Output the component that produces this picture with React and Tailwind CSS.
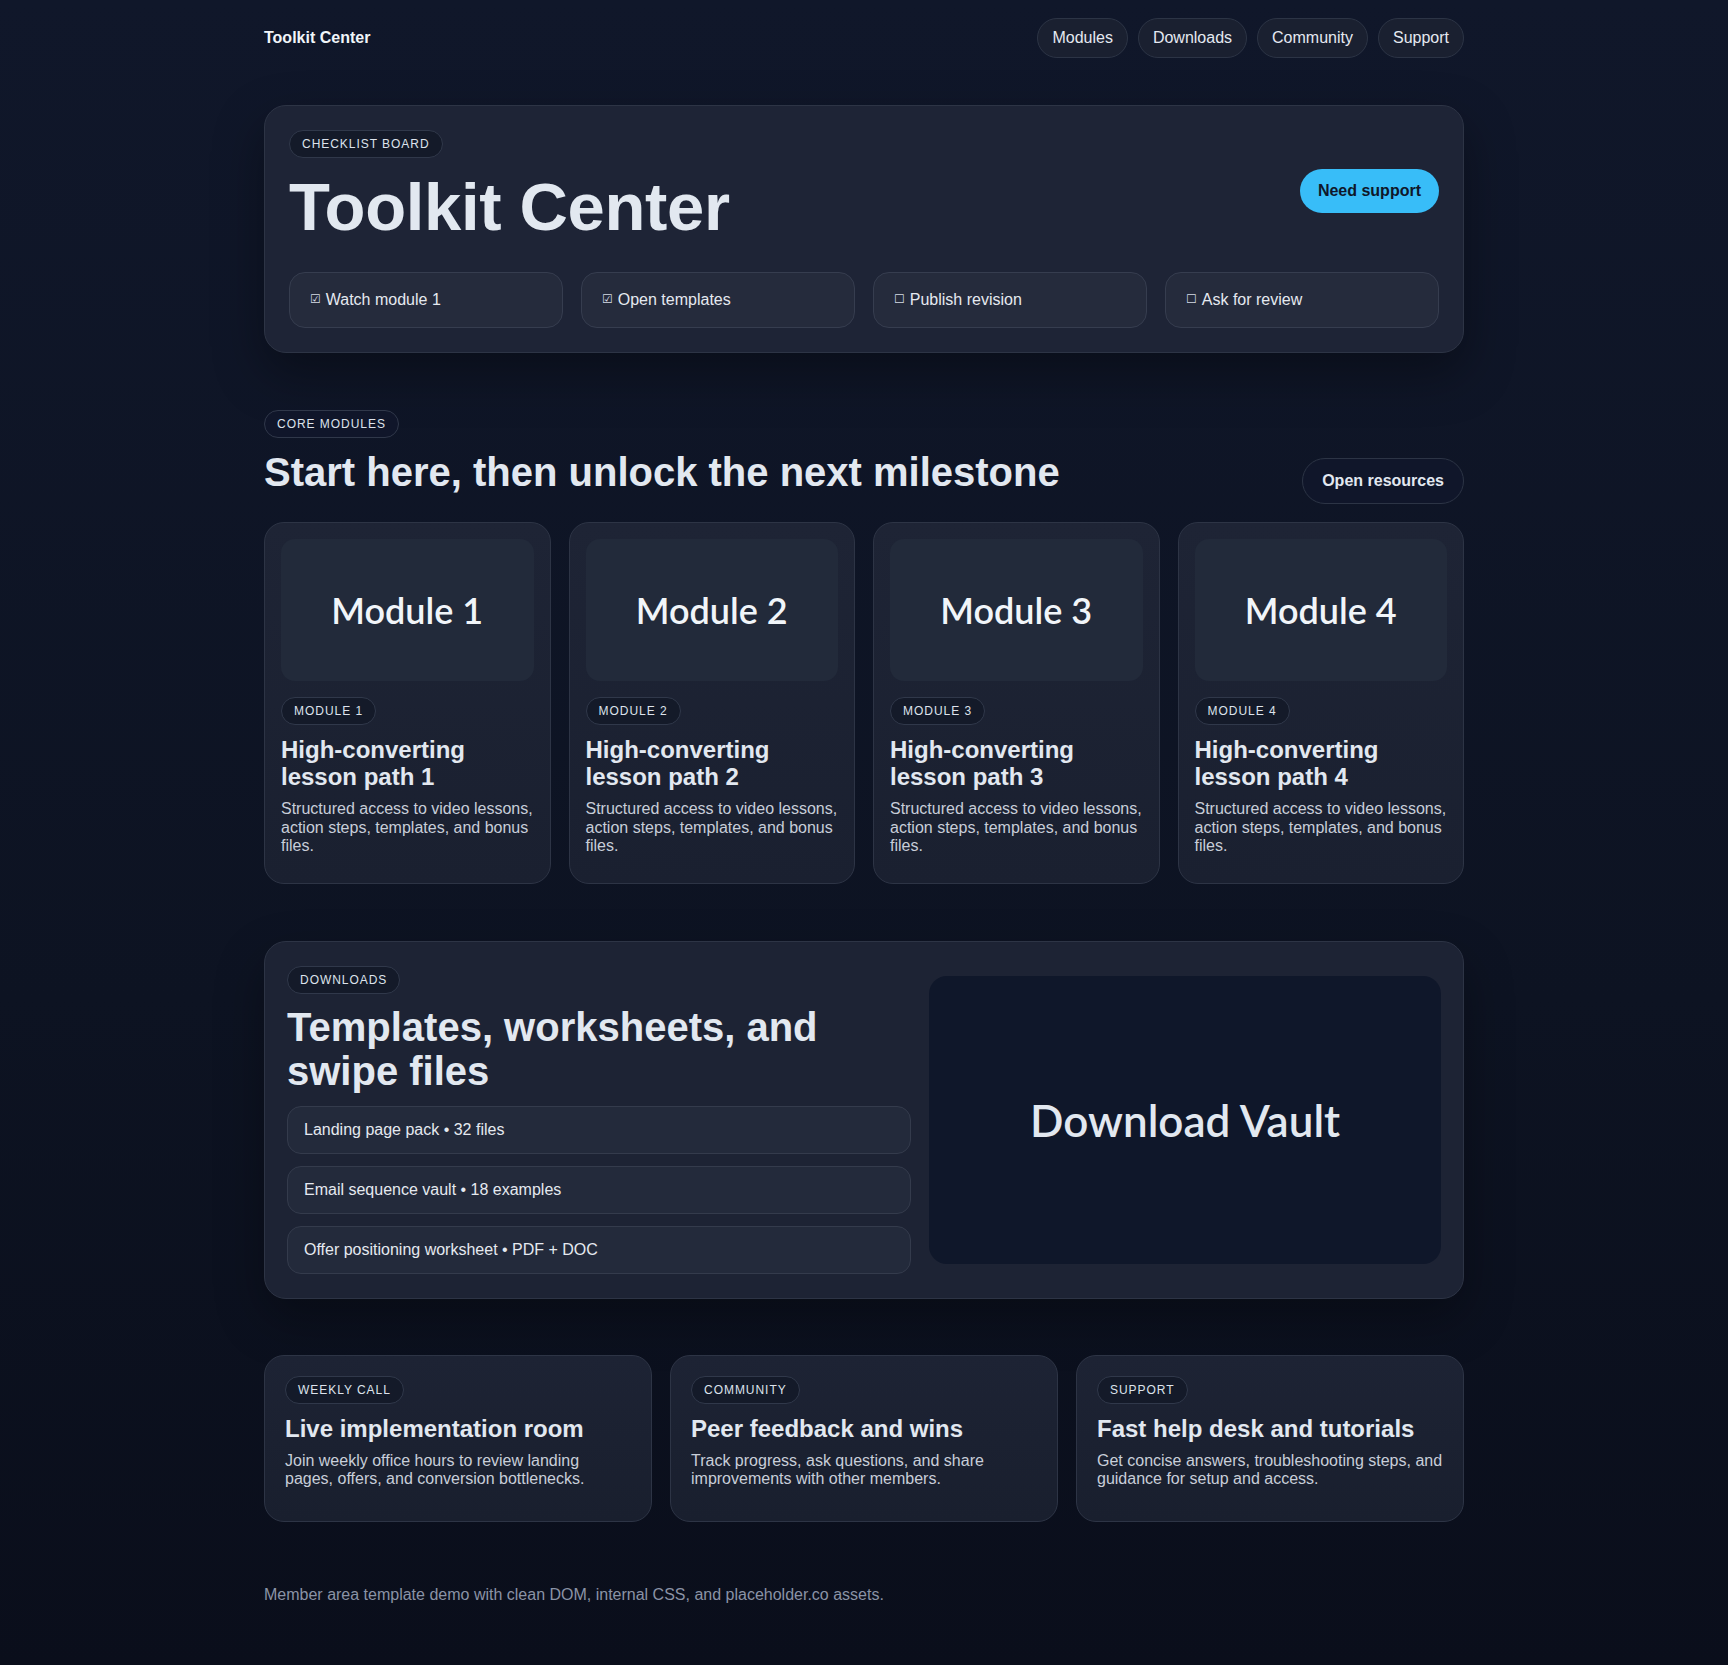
import React from "react";

const Badge = ({ children, className = "" }) => (
  <span
    className={`inline-flex items-center h-[28px] px-[12px] rounded-full border border-[#30384a] bg-[#141a29] text-[12px] tracking-[0.08em] uppercase text-[#dde3ec] leading-none ${className}`}
  >
    {children}
  </span>
);

const checklist = [
  { done: true, label: "Watch module 1" },
  { done: true, label: "Open templates" },
  { done: false, label: "Publish revision" },
  { done: false, label: "Ask for review" },
];

const modules = [1, 2, 3, 4];

const downloads = [
  "Landing page pack • 32 files",
  "Email sequence vault • 18 examples",
  "Offer positioning worksheet • PDF + DOC",
];

const bottomCards = [
  {
    tag: "Weekly call",
    title: "Live implementation room",
    desc: "Join weekly office hours to review landing pages, offers, and conversion bottlenecks.",
  },
  {
    tag: "Community",
    title: "Peer feedback and wins",
    desc: "Track progress, ask questions, and share improvements with other members.",
  },
  {
    tag: "Support",
    title: "Fast help desk and tutorials",
    desc: "Get concise answers, troubleshooting steps, and guidance for setup and access.",
  },
];

export default function App() {
  return (
    <div className="min-h-screen bg-[linear-gradient(180deg,#10172a_0%,#0d1322_60%,#0a0e1b_100%)] text-[#e2e8f0] font-['Liberation_Sans',Arial,sans-serif] leading-[1.15]">
      <div className="max-w-[1200px] mx-auto pt-[18px] pb-[61px]">
        {/* Header */}
        <header className="flex items-center justify-between h-[40px]">
          <div className="text-[16px] font-bold text-[#f1f5f9]">Toolkit Center</div>
          <nav className="flex items-center gap-[10px]">
            {["Modules", "Downloads", "Community", "Support"].map((n) => (
              <a
                key={n}
                className="h-[40px] px-[14px] flex items-center rounded-full border border-[#2c3445] bg-[#1a2030] text-[16px] text-[#e5e9f0]"
              >
                {n}
              </a>
            ))}
          </nav>
        </header>

        {/* Hero */}
        <section className="mt-[47px] rounded-[22px] border border-[#2d3445] bg-[#1e2436] p-6 shadow-[0_20px_50px_rgba(0,0,0,0.35)]">
          <div className="flex items-center justify-between">
            <div>
              <Badge>Checklist board</Badge>
              <h1 className="mt-[14px] text-[67px] font-bold leading-[1.05] tracking-[-0.005em] text-[#e2e8f0]">
                Toolkit Center
              </h1>
            </div>
            <button className="mt-[10px] h-[44px] px-[18px] rounded-full bg-[#38bdf8] text-[#0f172a] text-[16px] font-bold">
              Need support
            </button>
          </div>
          <div className="mt-[30px] grid grid-cols-4 gap-[18px]">
            {checklist.map((c) => (
              <div
                key={c.label}
                className="h-[56px] flex items-center px-5 rounded-[16px] border border-[#363d4f] bg-[#252b3c] text-[16px] text-[#e5e9f0]"
              >
                <span className="text-[12px] font-['DejaVu_Sans',sans-serif] mr-[5px] text-[#d5dbe5]">
                  {c.done ? "☑" : "☐"}
                </span>
                {c.label}
              </div>
            ))}
          </div>
        </section>

        {/* Core modules */}
        <section className="mt-[57px]">
          <div className="flex items-end justify-between">
            <div className="pb-[10px]">
              <Badge className="bg-[#10162a]">Core modules</Badge>
              <h2 className="mt-[12px] text-[40px] font-bold leading-[1.1] text-[#e2e8f0]">
                Start here, then unlock the next milestone
              </h2>
            </div>
            <button className="h-[46px] px-[19px] rounded-full border border-[#2c3445] bg-[#10162a] text-[16px] font-bold text-[#e2e8f0]">
              Open resources
            </button>
          </div>
          <div className="mt-[18px] grid grid-cols-4 gap-[18px]">
            {modules.map((m) => (
              <div
                key={m}
                className="rounded-[20px] border border-[#2d3445] bg-[linear-gradient(180deg,#1e2435,#1a2030)] p-4 pb-7"
              >
                <div className="aspect-video rounded-[14px] bg-[#222a3a] flex items-center justify-center font-['Lato',sans-serif] font-semibold text-[36px] text-[#f1f5f9]">
                  Module {m}
                </div>
                <Badge className="mt-4">Module {m}</Badge>
                <h3 className="mt-[12px] text-[24px] font-bold leading-[1.1] text-[#e2e8f0]">
                  High-converting lesson path {m}
                </h3>
                <p className="mt-[10px] text-[16px] text-[#c8ced9]">
                  Structured access to video lessons, action steps, templates, and bonus files.
                </p>
              </div>
            ))}
          </div>
        </section>

        {/* Downloads */}
        <section className="mt-[57px] rounded-[22px] border border-[#2d3445] bg-[#1d2334] px-[22px] py-6 grid grid-cols-[1.22fr_1fr] gap-[18px] items-center shadow-[0_20px_50px_rgba(0,0,0,0.3)]">
          <div>
            <Badge>Downloads</Badge>
            <h2 className="mt-[12px] text-[40px] font-bold leading-[1.08] text-[#e2e8f0]">
              Templates, worksheets, and swipe files
            </h2>
            <div className="mt-[13px] flex flex-col gap-[12px]">
              {downloads.map((d) => (
                <div
                  key={d}
                  className="h-[48px] flex items-center px-4 rounded-[14px] border border-[#343b4c] bg-[#232a3b] text-[16px] text-[#e5e9f0]"
                >
                  {d}
                </div>
              ))}
            </div>
          </div>
          <div className="aspect-video rounded-[18px] bg-[#0f172a] flex items-center justify-center font-['Lato',sans-serif] font-semibold text-[44px] text-[#e2e8f0]">
            Download Vault
          </div>
        </section>

        {/* Bottom cards */}
        <section className="mt-[56px] grid grid-cols-3 gap-[18px]">
          {bottomCards.map((c) => (
            <div
              key={c.tag}
              className="rounded-[20px] border border-[#2d3445] bg-[linear-gradient(180deg,#1d2334,#191f2e)] p-5 pt-[20px] pb-[32px]"
            >
              <Badge>{c.tag}</Badge>
              <h3 className="mt-[12px] text-[24px] font-bold leading-[1.1] text-[#e2e8f0]">
                {c.title}
              </h3>
              <p className="mt-[10px] text-[16px] text-[#c8ced9]">{c.desc}</p>
            </div>
          ))}
        </section>

        <footer className="mt-[64px] text-[16px] text-[#8a93a6]">
          Member area template demo with clean DOM, internal CSS, and placeholder.co assets.
        </footer>
      </div>
    </div>
  );
}
